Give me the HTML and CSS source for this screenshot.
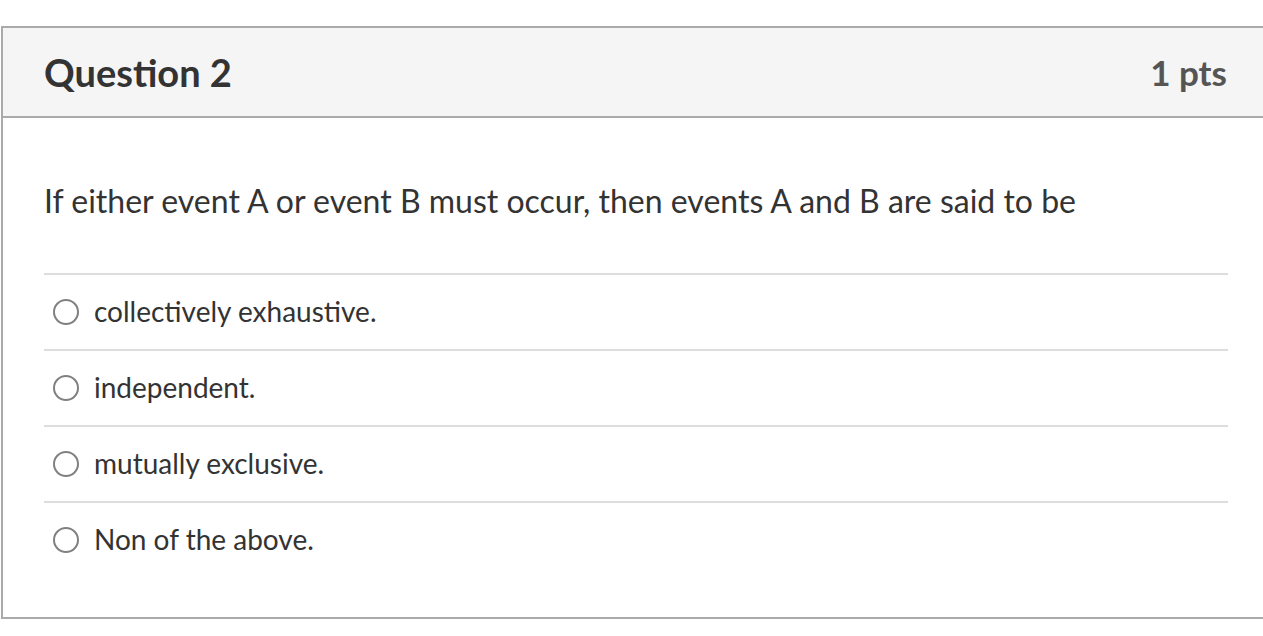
FILE: index.html
```html
<!DOCTYPE html>
<html>
<head>
<meta charset="utf-8">
<link rel="stylesheet" href="styles.css">
</head>
<body>
<div class="page">
  <div class="card">
    <div class="card-header">
      <h2 class="title">Question 2</h2>
      <span class="pts">1 pts</span>
    </div>
    <div class="card-body">
      <p class="question">If either event A or event B must occur, then events A and B are said to be</p>
      <div class="answers">
        <label class="answer"><span class="radio"></span><span class="answer-text">collectively exhaustive.</span></label>
        <label class="answer"><span class="radio"></span><span class="answer-text">independent.</span></label>
        <label class="answer"><span class="radio"></span><span class="answer-text">mutually exclusive.</span></label>
        <label class="answer"><span class="radio"></span><span class="answer-text">Non of the above.</span></label>
      </div>
    </div>
  </div>
</div>
</body>
</html>
```

FILE: styles.css
```css
html, body {
  margin: 0;
  padding: 0;
  background: #ffffff;
  overflow: hidden;
}
body {
  font-family: Lato, "Open Sans", sans-serif;
  color: #2d3b45;
}
.page {
  padding: 26px 0 0 1px;
}
.card {
  border: 2px solid #aaaaaa;
  border-right: none;
}
.card-header {
  background: #f5f5f5;
  border-bottom: 2px solid #aaaaaa;
  height: 90px;
  box-sizing: border-box;
  display: flex;
  align-items: center;
  justify-content: space-between;
  padding: 0 36px 0 41px;
}
.title {
  margin: 0;
  font-size: 38px;
  font-weight: 700;
  color: #333333;
}
.pts {
  font-size: 35px;
  font-weight: 700;
  color: #555555;
}
.card-body {
  padding: 0 35px 40px 41px;
}
.question {
  margin: 0;
  height: 157px;
  display: flex;
  align-items: center;
  font-size: 32px;
  color: #333333;
  border-bottom: 2px solid #dddddd;
  box-sizing: border-box;
  padding-top: 10px;
}
.answers {
  display: flex;
  flex-direction: column;
}
.answer {
  display: flex;
  align-items: center;
  height: 76px;
  box-sizing: border-box;
  border-bottom: 2px solid #dddddd;
  padding-left: 9px;
}
.answer:last-child {
  border-bottom: none;
  height: 74px;
}
.radio {
  width: 22px;
  height: 22px;
  border: 2px solid #808080;
  border-radius: 50%;
  flex: none;
}
.answer-text {
  margin-left: 15px;
  margin-bottom: 3px;
  font-size: 28px;
  color: #333333;
}
```
